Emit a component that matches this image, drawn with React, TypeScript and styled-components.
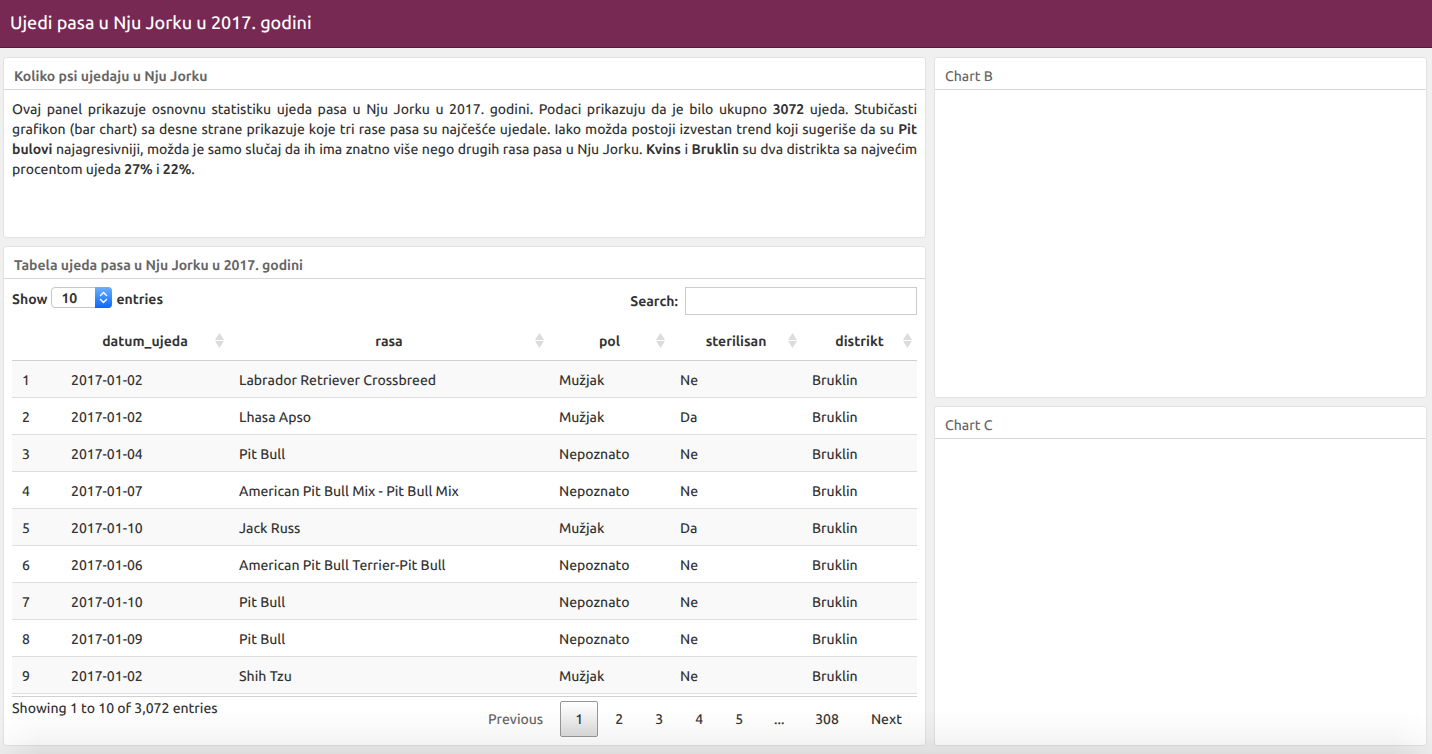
import React, { useState } from "react";
import styled, { createGlobalStyle, css } from "styled-components";

const GlobalStyle = createGlobalStyle`
  *, *::before, *::after { box-sizing: border-box; }
  body {
    margin: 0;
    background: #f0f0f0;
    color: #333;
    font: 500 14px/20px Ubuntu, "Noto Sans", "Open Sans", sans-serif;
    text-rendering: geometricPrecision;
  }
  button, input, select { font: inherit; color: inherit; text-rendering: inherit; }
`;

const Page = styled.div`
  display: flex;
  flex-direction: column;
  height: 100vh;
  min-height: 480px;

  &::after {
    content: "";
    position: fixed;
    inset: auto 0 0 0;
    height: 44px;
    pointer-events: none;
    background: linear-gradient(to bottom, rgba(0, 0, 0, 0), rgba(0, 0, 0, 0.03) 60%, rgba(0, 0, 0, 0.08));
    mask-image: linear-gradient(to right, rgba(0, 0, 0, 0.3), #000 40px, #000 calc(100% - 40px), rgba(0, 0, 0, 0.3));
  }
`;

const NavBar = styled.header`
  flex: none;
  height: 48px;
  padding: 11px 10px;
  background: #772953;
  border-bottom: 1px solid #511c39;
`;

const NavTitle = styled.h1`
  margin: 0;
  color: #fff;
  font-size: 18px;
  font-weight: 500;
  line-height: 24px;
`;

const Dashboard = styled.main`
  flex: 1;
  min-height: 0;
  display: grid;
  grid-template-columns: minmax(0, 923fr) minmax(0, 493fr);
  gap: 8px;
  padding: 9px 5px 8px 3px;
`;

const Column = styled.div<{ $rows: string }>`
  display: grid;
  grid-template-rows: ${(p) => p.$rows};
  gap: 8px;
  min-height: 0;
`;

const Panel = styled.section`
  display: flex;
  flex-direction: column;
  min-height: 0;
  overflow: hidden;
  background: #fff;
  border: 1px solid #e2e2e2;
  border-radius: 3px;
`;

const PanelTitle = styled.h2<{ $strong?: boolean }>`
  flex: none;
  margin: 0;
  padding: 8px 10px 3px;
  border-bottom: 1px solid #d7d7d7;
  color: #666;
  font-size: 14px;
  font-weight: ${(p) => (p.$strong ? 700 : 500)};
  line-height: 20px;
`;

const Story = styled.p`
  margin: 0;
  padding: 9px 8px;
  text-align: justify;
`;

const TableBody = styled.div`
  flex: 1;
  min-height: 0;
  display: flex;
  flex-direction: column;
  padding: 8px 8px 0;
`;

const Controls = styled.div`
  display: flex;
  justify-content: space-between;
  align-items: flex-start;
  margin-bottom: 6px;
  font-weight: 700;
`;

const LengthLabel = styled.label`
  display: flex;
  align-items: flex-start;
  gap: 4px;
  line-height: 24px;
`;

const SelectWrap = styled.span`
  position: relative;
  display: flex;
`;

const LengthSelect = styled.select`
  appearance: none;
  width: 61px;
  height: 21px;
  padding: 2px 20px 0 9px;
  border: 1px solid #c6c6c6;
  border-radius: 4px;
  background: #fff;
  font-weight: 700;
  line-height: 17px;
`;

const Stepper = styled.svg`
  position: absolute;
  top: 0;
  right: 0;
  pointer-events: none;
`;

const SearchLabel = styled.label`
  display: flex;
  align-items: center;
  gap: 7px;
  line-height: 22px;
`;

const SearchInput = styled.input`
  width: 232px;
  height: 28px;
  padding: 4px;
  border: 1px solid #ccc;
  background: #fff;
  font-weight: 400;
`;

const Scroller = styled.div`
  flex: 1;
  min-height: 0;
  overflow: auto;
  scrollbar-width: none;
  border-bottom: 1px solid #d0d0d0;
`;

const DataTable = styled.table`
  width: 100%;
  table-layout: fixed;
  border-collapse: separate;
  border-spacing: 0;
`;

const HeadCell = styled.th`
  position: sticky;
  top: 0;
  padding: 10px 10px 9px;
  background: #fff;
  border-bottom: 1px solid #d0d0d0;
  font-weight: 700;
  text-align: center;
`;

const SortIcon = styled.svg`
  position: absolute;
  top: 12px;
  right: 5px;
`;

const Row = styled.tr`
  &:nth-child(odd) { background: #f9f9f9; }
`;

const Cell = styled.td`
  padding: 9px 10px 7px;
  border-bottom: 1px solid #ddd;
  white-space: nowrap;
`;

const Footer = styled.div`
  flex: none;
  display: flex;
  justify-content: space-between;
  height: 48px;
  padding-top: 1px;
`;

const Pager = styled.nav`
  display: flex;
  gap: 2px;
  padding-top: 3px;
`;

const pageBox = css`
  min-width: 38px;
  height: 36px;
  padding: 0 14px;
  border: 1px solid transparent;
  border-radius: 2px;
  text-align: center;
  line-height: 34px;
`;

const PageButton = styled.button<{ $current?: boolean }>`
  ${pageBox}
  background: none;
  cursor: pointer;
  &:disabled { color: #666; cursor: default; }
  ${(p) =>
    p.$current &&
    css`
      border-color: #979797;
      background: linear-gradient(to bottom, #fff, #dcdcdc);
    `}
`;

const Ellipsis = styled.span`
  ${pageBox}
  padding: 0 11px;
`;

const columns = [
  { name: "", width: 49 },
  { name: "datum_ujeda", width: 168 },
  { name: "rasa", width: 320 },
  { name: "pol", width: 121 },
  { name: "sterilisan", width: 132 },
  { name: "distrikt", width: 115 },
];

const bites = [
  ["1", "2017-01-02", "Labrador Retriever Crossbreed", "Mužjak", "Ne", "Bruklin"],
  ["2", "2017-01-02", "Lhasa Apso", "Mužjak", "Da", "Bruklin"],
  ["3", "2017-01-04", "Pit Bull", "Nepoznato", "Ne", "Bruklin"],
  ["4", "2017-01-07", "American Pit Bull Mix - Pit Bull Mix", "Nepoznato", "Ne", "Bruklin"],
  ["5", "2017-01-10", "Jack Russ", "Mužjak", "Da", "Bruklin"],
  ["6", "2017-01-06", "American Pit Bull Terrier-Pit Bull", "Nepoznato", "Ne", "Bruklin"],
  ["7", "2017-01-10", "Pit Bull", "Nepoznato", "Ne", "Bruklin"],
  ["8", "2017-01-09", "Pit Bull", "Nepoznato", "Ne", "Bruklin"],
  ["9", "2017-01-02", "Shih Tzu", "Mužjak", "Ne", "Bruklin"],
];

const pages = ["1", "2", "3", "4", "5", "...", "308"];

export default function App() {
  const [page, setPage] = useState("1");
  const [search, setSearch] = useState("");

  return (
    <>
      <GlobalStyle />
      <Page>
        <NavBar>
          <NavTitle>Ujedi pasa u Nju Jorku u 2017. godini</NavTitle>
        </NavBar>
        <Dashboard>
          <Column $rows="minmax(0, 181fr) minmax(0, 500fr)">
            <Panel>
              <PanelTitle $strong>Koliko psi ujedaju u Nju Jorku</PanelTitle>
              <Story>
                Ovaj panel prikazuje osnovnu statistiku ujeda pasa u Nju Jorku u 2017. godini. Podaci prikazuju da je
                bilo ukupno <b>3072</b> ujeda. Stubičasti grafikon (bar chart) sa desne strane prikazuje koje tri rase
                pasa su najčešće ujedale. Iako možda postoji izvestan trend koji sugeriše da su <b>Pit bulovi</b>{" "}
                najagresivniji, možda je samo slučaj da ih ima znatno više nego drugih rasa pasa u Nju Jorku.{" "}
                <b>Kvins</b> i <b>Bruklin</b> su dva distrikta sa najvećim procentom ujeda <b>27%</b> i <b>22%</b>.
              </Story>
            </Panel>
            <Panel>
              <PanelTitle $strong>Tabela ujeda pasa u Nju Jorku u 2017. godini</PanelTitle>
              <TableBody>
                <Controls>
                  <LengthLabel htmlFor="length">
                    Show
                    <SelectWrap>
                      <LengthSelect id="length" defaultValue="10">
                        <option>10</option>
                        <option>25</option>
                        <option>50</option>
                        <option>100</option>
                      </LengthSelect>
                      <Stepper width="17" height="21" viewBox="0 0 17 21" aria-hidden="true">
                        <defs>
                          <linearGradient id="stepper" x1="0" y1="0" x2="0" y2="1">
                            <stop offset="0" stopColor="#6cb0fa" />
                            <stop offset="1" stopColor="#0b69fb" />
                          </linearGradient>
                        </defs>
                        <path d="M0 0h13a4 4 0 0 1 4 4v13a4 4 0 0 1-4 4H0z" fill="url(#stepper)" />
                        <path
                          d="M5.5 8.5l3-3 3 3M5.5 12.5l3 3 3-3"
                          fill="none"
                          stroke="#fff"
                          strokeWidth="1.4"
                          strokeLinecap="round"
                          strokeLinejoin="round"
                        />
                      </Stepper>
                    </SelectWrap>
                    entries
                  </LengthLabel>
                  <SearchLabel htmlFor="search">
                    Search:
                    <SearchInput id="search" type="search" value={search} onChange={(e) => setSearch(e.target.value)} />
                  </SearchLabel>
                </Controls>
                <Scroller>
                  <DataTable>
                    <colgroup>
                      {columns.map((c) => (
                        <col key={c.name} width={c.width} />
                      ))}
                    </colgroup>
                    <thead>
                      <tr>
                        {columns.map((c) => (
                          <HeadCell key={c.name} scope="col">
                            {c.name}
                            {c.name && (
                              <SortIcon width="9" height="15" viewBox="0 0 9 15" fill="#dcdcdc" aria-hidden="true">
                                <path d="M4.5 0L9 7H0zM4.5 15L0 8h9z" />
                              </SortIcon>
                            )}
                          </HeadCell>
                        ))}
                      </tr>
                    </thead>
                    <tbody>
                      {bites.map((bite) => (
                        <Row key={bite[0]}>
                          {bite.map((value, i) => (
                            <Cell key={i}>{value}</Cell>
                          ))}
                        </Row>
                      ))}
                    </tbody>
                  </DataTable>
                </Scroller>
                <Footer>
                  <div>Showing 1 to 10 of 3,072 entries</div>
                  <Pager aria-label="Pages">
                    <PageButton disabled>Previous</PageButton>
                    {pages.map((p) =>
                      p === "..." ? (
                        <Ellipsis key={p}>...</Ellipsis>
                      ) : (
                        <PageButton key={p} $current={p === page} onClick={() => setPage(p)}>
                          {p}
                        </PageButton>
                      )
                    )}
                    <PageButton>Next</PageButton>
                  </Pager>
                </Footer>
              </TableBody>
            </Panel>
          </Column>
          <Column $rows="minmax(0, 341fr) minmax(0, 340fr)">
            <Panel>
              <PanelTitle>Chart B</PanelTitle>
            </Panel>
            <Panel>
              <PanelTitle>Chart C</PanelTitle>
            </Panel>
          </Column>
        </Dashboard>
      </Page>
    </>
  );
}
